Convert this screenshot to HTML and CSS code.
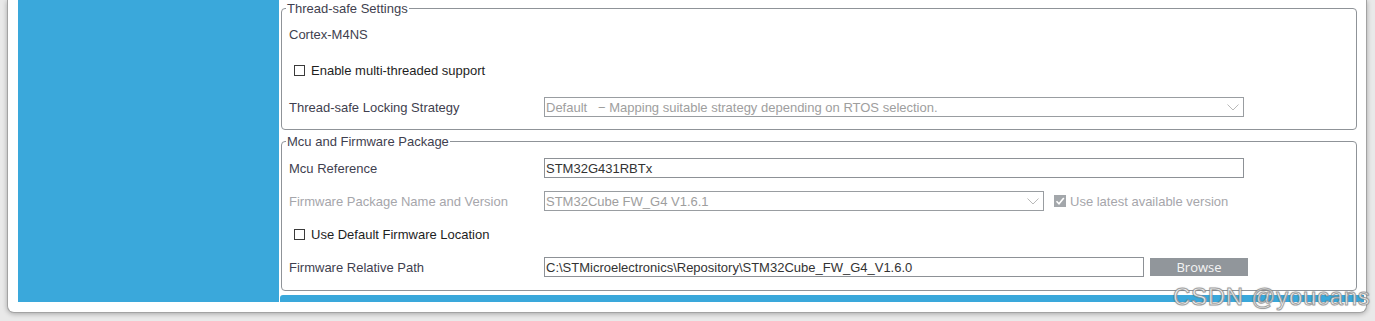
FILE: index.html
```html
<!DOCTYPE html>
<html lang="en">
<head>
  <meta charset="UTF-8" />
  <title>Project Manager - Thread-safe Settings</title>
  <link rel="stylesheet" href="styles.css">
</head>
<body>
  <div class="window">
    <aside class="sidebar"></aside>
    <main class="main">
      <fieldset class="group group-thread">
        <legend>Thread-safe Settings</legend>
        <div class="row"><span class="label">Cortex-M4NS</span></div>
        <div class="row">
          <label class="check"><span class="box"></span>Enable multi-threaded support</label>
        </div>
        <div class="row">
          <span class="label">Thread-safe Locking Strategy</span>
          <div class="field combo disabled w700">
            <span>Default&nbsp;&nbsp;&nbsp;&minus;&nbsp;Mapping suitable strategy depending on RTOS selection.</span>
            <svg class="chevron" width="12" height="7" viewBox="0 0 12 7"><path d="M0.5 0.5 L6 6 L11.5 0.5" /></svg>
          </div>
        </div>
      </fieldset>

      <fieldset class="group group-mcu">
        <legend>Mcu and Firmware Package</legend>
        <div class="row">
          <span class="label">Mcu Reference</span>
          <div class="field w700">STM32G431RBTx</div>
        </div>
        <div class="row">
          <span class="label muted">Firmware Package Name and Version</span>
          <div class="field combo disabled w500">
            <span>STM32Cube FW_G4 V1.6.1</span>
            <svg class="chevron" width="12" height="7" viewBox="0 0 12 7"><path d="M0.5 0.5 L6 6 L11.5 0.5" /></svg>
          </div>
          <span class="tick">
            <svg width="12" height="12" viewBox="0 0 12 12"><path d="M2.5 6.2 L5 8.7 L9.8 3" /></svg>
          </span>
          <span class="muted">Use latest available version</span>
        </div>
        <div class="row">
          <label class="check"><span class="box"></span>Use Default Firmware Location</label>
        </div>
        <div class="row">
          <span class="label">Firmware Relative Path</span>
          <div class="field w600">C:\STMicroelectronics\Repository\STM32Cube_FW_G4_V1.6.0</div>
          <button type="button" class="browse">Browse</button>
        </div>
      </fieldset>

      <div class="band"></div>
    </main>
  </div>
  <div class="watermark">CSDN @youcans</div>
</body>
</html>
```

FILE: styles.css
```css
body {
  margin: 0;
  height: 321px;
  overflow: hidden;
  position: relative;
  background: #e9e9e9;
  font-family: "Liberation Sans", Arial, sans-serif;
  font-size: 13px;
  color: #3f3f4f;
}
.window {
  box-sizing: border-box;
  margin-left: 7px;
  width: 1360px;
  height: 313px;
  display: flex;
  padding: 0 0 10px 10px;
  background: #fff;
  border: 1px solid #a3a3a3;
  border-top: none;
  border-radius: 0 0 7px 7px;
  box-shadow: 0 1px 5px rgba(0, 0, 0, 0.28);
}
.sidebar {
  width: 261px;
  flex: none;
  background: #3aa8db;
}
.main {
  flex: 1;
  display: flex;
  flex-direction: column;
  min-width: 0;
}
.group {
  margin: 0 9px 0 2px;
  border: 1px solid #8f9398;
  border-radius: 4px;
  display: flex;
  flex-direction: column;
  min-width: 0;
}
.group legend {
  padding: 0 1px;
  margin-left: -3px;
  line-height: 15px;
}
.group-thread {
  margin-top: 1px;
  padding: 8px 0 12px 7px;
  gap: 16.5px;
}
.group-mcu {
  margin-top: 4px;
  padding: 9px 0 13px 7px;
  gap: 13px;
}
.row {
  display: flex;
  align-items: center;
  height: 20px;
}
.label {
  width: 255px;
  flex: none;
}
.muted {
  color: #a6a6ab;
}
.check {
  display: flex;
  align-items: center;
  margin-left: 5px;
  color: #1e1e1e;
}
.box {
  box-sizing: border-box;
  width: 11px;
  height: 11px;
  margin-right: 6px;
  border: 1px solid #3a3a3a;
  background: #fff;
}
.field {
  box-sizing: border-box;
  height: 20px;
  padding: 0 1px;
  display: flex;
  align-items: center;
  border: 1px solid #8d9196;
  color: #333;
  white-space: nowrap;
}
.w700 { width: 700px; }
.w600 { width: 600px; }
.w500 { width: 500px; }
.combo.disabled {
  color: #9e9e9e;
  border-color: #999da1;
}
.chevron {
  margin-left: auto;
  margin-right: 3px;
  fill: none;
  stroke: #b9b9b9;
  stroke-width: 1;
}
.tick {
  width: 12px;
  height: 12px;
  margin: 0 4px 0 10px;
  background: #a3a7ab;
  display: flex;
}
.tick path {
  fill: none;
  stroke: #fff;
  stroke-width: 1.6;
}
.browse {
  margin-left: 6px;
  width: 98px;
  height: 18px;
  padding: 0;
  border: none;
  background: #91969b;
  color: #f4f4f4;
  font-family: "Open Sans", "Noto Sans", sans-serif;
  font-size: 13px;
  line-height: 18px;
}
.band {
  margin: 4px 2px 0 1px;
  height: 7px;
  background: #3aa8db;
  border-radius: 3px 0 0 0;
}
.watermark {
  position: absolute;
  left: 1173px;
  top: 285px;
  font-size: 24px;
  line-height: 24px;
  letter-spacing: 0.7px;
  color: rgba(255, 255, 255, 0.85);
  -webkit-text-stroke: 1px rgba(140, 140, 140, 0.8);
  text-shadow: 0 0 2px rgba(0, 0, 0, 0.3);
  white-space: nowrap;
}
```
